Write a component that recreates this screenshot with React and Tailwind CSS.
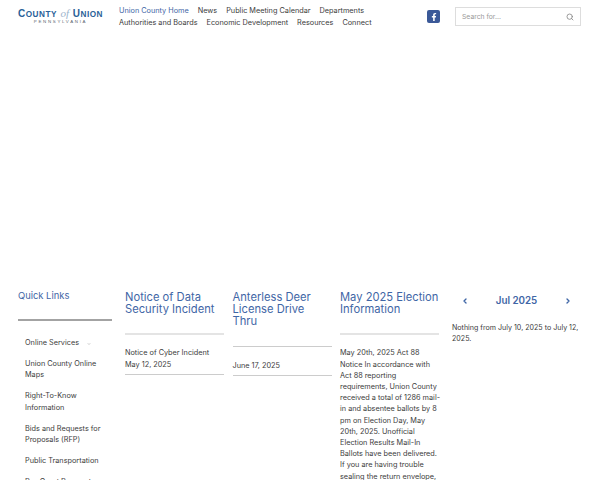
import React from "react";
import { Search, ChevronLeft, ChevronRight, ChevronDown } from "lucide-react";
import { FaFacebookF } from "react-icons/fa";

const F = { fontFamily: '"Inter", "Open Sans", sans-serif' };

function Logo() {
  return (
    <div className="w-[101px] shrink-0 pt-[3px]">
      <div className="w-[85px] flex items-baseline justify-between text-[#2a6198] text-[8.2px] leading-[11px] font-bold whitespace-nowrap tracking-[0.5px]" style={{ fontFamily: '"Liberation Sans", sans-serif' }}>
        <span><span className="text-[10px]">C</span>OUNTY</span>
        <span className="italic font-normal text-[#9db4cc] text-[11px] tracking-normal" style={{ fontFamily: '"Liberation Serif", serif' }}>of</span>
        <span><span className="text-[10px]">U</span>NION</span>
      </div>
      <div className="w-[85px] text-center text-[#5d6670] text-[4.4px] leading-[6px] -mt-[1px] tracking-[1.7px] whitespace-nowrap" style={{ fontFamily: '"Liberation Sans", sans-serif' }}>PENNSYLVANIA</div>
    </div>
  );
}

function NavLink({ children, active }) {
  return <span className={active ? "text-[#3f66a6] whitespace-nowrap" : "text-[#3c3c3c] whitespace-nowrap"}>{children}</span>;
}

function Header() {
  return (
    <header className="flex items-start pl-[18px] pr-[19px] pt-[5px] h-[283px]">
      <Logo />
      <nav className="w-[300px] text-[7.3px] leading-[12px]">
        <div className="flex gap-[9px]">
          <NavLink active>Union County Home</NavLink>
          <NavLink>News</NavLink>
          <NavLink>Public Meeting Calendar</NavLink>
          <NavLink>Departments</NavLink>
        </div>
        <div className="flex gap-[9px]">
          <NavLink>Authorities and Boards</NavLink>
          <NavLink>Economic Development</NavLink>
          <NavLink>Resources</NavLink>
          <NavLink>Connect</NavLink>
        </div>
      </nav>
      <div className="ml-[8px] mt-[5px] w-[13px] h-[13px] rounded-[2px] bg-[#3b5998] flex items-center justify-center text-white">
        <FaFacebookF className="w-[8px] h-[8px]" />
      </div>
      <div className="ml-[15px] mt-[2px] w-[126px] h-[19px] border border-[#dddddd] flex items-center justify-between px-[6px] text-[6.8px] leading-[10px] text-[#9a9a9a]">
        <span className="pt-[1px]">Search for...</span>
        <Search className="w-[8px] h-[8px] text-[#888888]" strokeWidth={2.5} />
      </div>
    </header>
  );
}

function QuickItem({ children, chevron }) {
  return (
    <li className="mb-[9.8px] flex items-start">
      <span>{children}</span>
      {chevron && <ChevronDown className="w-[4px] h-[4px] ml-[8px] mt-[5px] text-[#666666]" />}
    </li>
  );
}

function Sidebar() {
  return (
    <aside className="w-[94px] shrink-0">
      <h3 className="text-[9.4px] leading-[12px] text-[#3f66a6] mt-[7px]">Quick Links</h3>
      <div className="h-[2px] bg-[#a3a3a3] mt-[17px]" />
      <ul className="pl-[7px] mt-[16px] text-[7.3px] leading-[11.3px] text-[#3c3c3c]">
        <QuickItem chevron>Online Services</QuickItem>
        <QuickItem>Union County Online Maps</QuickItem>
        <QuickItem>Right-To-Know Information</QuickItem>
        <QuickItem>Bids and Requests for Proposals (RFP)</QuickItem>
        <QuickItem>Public Transportation</QuickItem>
        <QuickItem>Pay Court Payments</QuickItem>
      </ul>
    </aside>
  );
}

function NewsCol({ title, spacer, children, mt, last }) {
  return (
    <article className="w-[99px] shrink-0">
      <h2 className="text-[11.2px] leading-[12.2px] text-[#3f66a6] mt-[7.5px] mb-[18.5px]">{title}</h2>
      <div className={spacer} />
      <div className={`${mt} text-[7.3px] leading-[11.2px] text-[#3c3c3c]`}>{children}</div>
      {last && <div className="h-px bg-[#cccccc] mt-[4px]" />}
    </article>
  );
}

function Calendar() {
  return (
    <aside className="w-[128px] ml-[13px] shrink-0">
      <div className="flex items-center justify-between pl-[9px] pr-[8px] mt-[12px] h-[12px]">
        <ChevronLeft className="w-[8px] h-[8px] text-[#3f66a6]" strokeWidth={4} />
        <span className="text-[9.8px] font-semibold text-[#3f66a6]">Jul 2025</span>
        <ChevronRight className="w-[8px] h-[8px] text-[#3f66a6]" strokeWidth={4} />
      </div>
      <p className="mt-[15px] text-[7.1px] leading-[11.3px] text-[#3c3c3c] whitespace-nowrap">Nothing from July 10, 2025 to July 12,<br />2025.</p>
    </aside>
  );
}

const mayLines = [
  "May 20th, 2025 Act 88",
  "Notice In accordance with",
  "Act 88 reporting",
  "requirements, Union County",
  "received a total of 1286 mail-",
  "in and absentee ballots by 8",
  "pm on Election Day, May",
  "20th, 2025. Unofficial",
  "Election Results Mail-In",
  "Ballots have been delivered.",
  "If you are having trouble",
  "sealing the return envelope,",
];

export default function App() {
  return (
    <div className="w-[600px] h-[480px] overflow-hidden bg-white" style={F}>
      <Header />
      <main className="flex pl-[18px]">
        <Sidebar />
        <div className="ml-[13px] flex gap-[8.5px]">
          <NewsCol title="Notice of Data Security Incident" spacer="h-[2px] bg-[#e4e4e4]" mt="mt-[12px]" last>
            <div>Notice of Cyber Incident</div>
            <div>May 12, 2025</div>
          </NewsCol>
          <NewsCol title="Anterless Deer License Drive Thru" spacer="h-px bg-[#cccccc]" mt="mt-[13px]" last>
            <div>June 17, 2025</div>
          </NewsCol>
          <NewsCol title="May 2025 Election Information" spacer="h-[2px] bg-[#e4e4e4]" mt="mt-[12px]">
            {mayLines.map((l) => (
              <div key={l} className="whitespace-nowrap">{l}</div>
            ))}
          </NewsCol>
        </div>
        <Calendar />
      </main>
    </div>
  );
}
